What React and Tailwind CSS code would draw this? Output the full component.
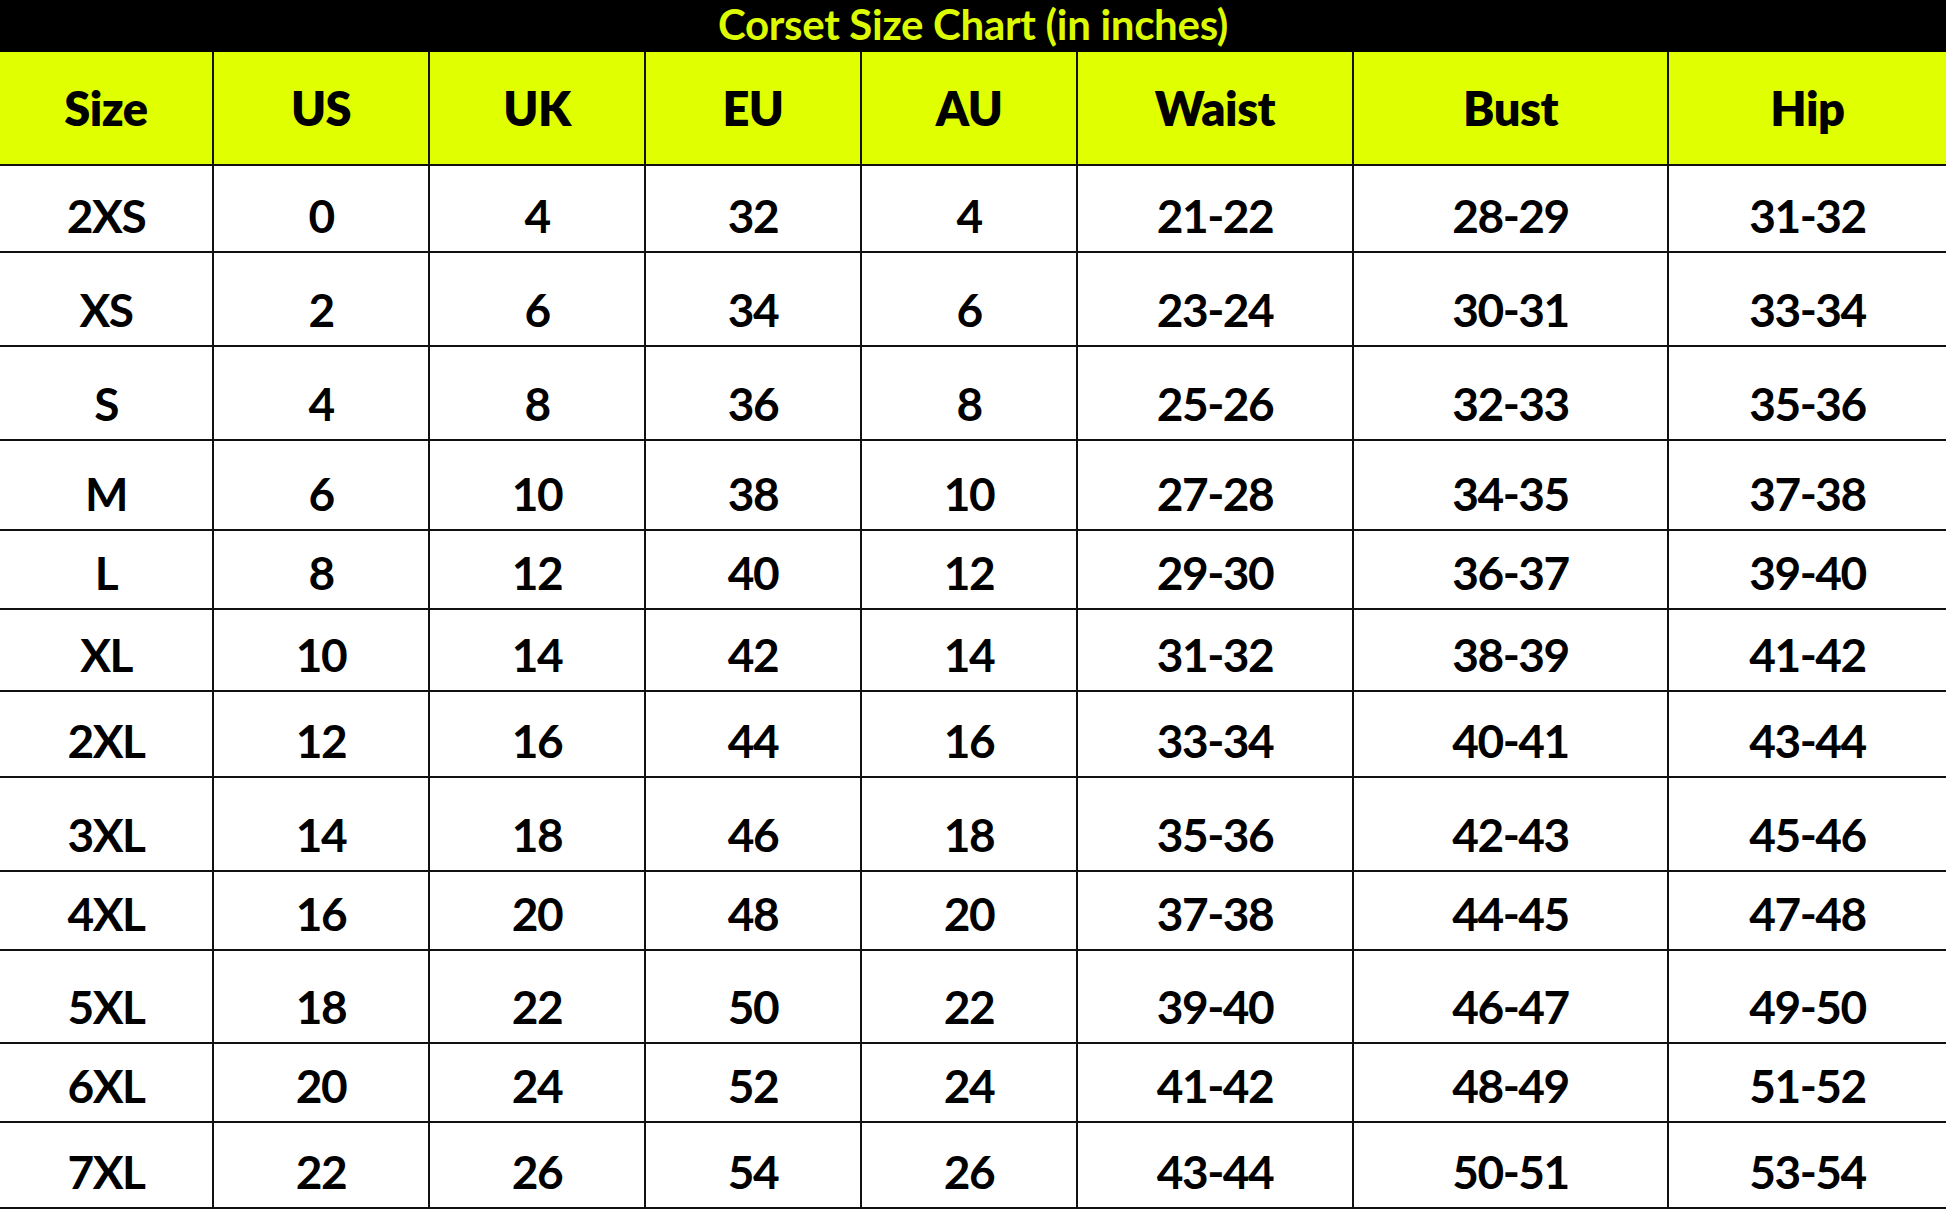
const headers = ['Size', 'US', 'UK', 'EU', 'AU', 'Waist', 'Bust', 'Hip']

// each row: values + its height class (rows in the chart are not all the same height)
const rows = [
  { h: 'h-[87px]', cells: ['2XS', '0', '4', '32', '4', '21-22', '28-29', '31-32'] },
  { h: 'h-[94px]', cells: ['XS', '2', '6', '34', '6', '23-24', '30-31', '33-34'] },
  { h: 'h-[94px]', cells: ['S', '4', '8', '36', '8', '25-26', '32-33', '35-36'] },
  { h: 'h-[90px]', cells: ['M', '6', '10', '38', '10', '27-28', '34-35', '37-38'] },
  { h: 'h-[79px]', cells: ['L', '8', '12', '40', '12', '29-30', '36-37', '39-40'] },
  { h: 'h-[82px]', cells: ['XL', '10', '14', '42', '14', '31-32', '38-39', '41-42'] },
  { h: 'h-[86px]', cells: ['2XL', '12', '16', '44', '16', '33-34', '40-41', '43-44'] },
  { h: 'h-[94px]', cells: ['3XL', '14', '18', '46', '18', '35-36', '42-43', '45-46'] },
  { h: 'h-[79px]', cells: ['4XL', '16', '20', '48', '20', '37-38', '44-45', '47-48'] },
  { h: 'h-[93px]', cells: ['5XL', '18', '22', '50', '22', '39-40', '46-47', '49-50'] },
  { h: 'h-[79px]', cells: ['6XL', '20', '24', '52', '24', '41-42', '48-49', '51-52'] },
  { h: 'h-[86px]', cells: ['7XL', '22', '26', '54', '26', '43-44', '50-51', '53-54'] },
]

export default function App() {
  return (
    <div className="w-[1946px] h-[1210px] bg-white text-black font-['Lato','Liberation_Sans',sans-serif] overflow-hidden">
      {/* Title bar */}
      <div className="h-[52px] bg-black flex items-center justify-center pb-[4px]">
        <h1 className="text-[#dcfa00] font-bold text-[42px] leading-none tracking-[-0.3px]">
          Corset Size Chart (in inches)
        </h1>
      </div>

      {/* Table */}
      <div className="grid grid-cols-[214px_216px_216px_216px_216px_276px_315px_277px]">
        {headers.map((label, i) => (
          <div
            key={label}
            className={
              'h-[114px] bg-[#e0ff00] border-b-2 border-[#111] flex items-center justify-center text-[47px] font-extrabold leading-none tracking-[-0.5px] ' +
              (i < headers.length - 1 ? 'border-r-2' : '')
            }
          >
            {label}
          </div>
        ))}

        {rows.map((row) =>
          row.cells.map((value, i) => (
            <div
              key={row.cells[0] + '-' + i}
              className={
                row.h +
                ' border-b-2 border-[#111] flex items-end justify-center pb-[12px] text-[46px] font-bold leading-none tracking-[-1.5px] ' +
                (i < row.cells.length - 1 ? 'border-r-2' : '')
              }
            >
              {value}
            </div>
          ))
        )}
      </div>
    </div>
  )
}
